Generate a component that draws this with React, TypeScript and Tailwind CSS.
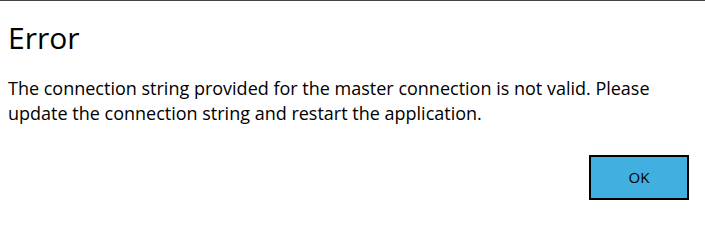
export default function App() {
    return (
        <div
            className="w-[705px] h-[232px] bg-white border-t border-[#444444] flex flex-col"
            style={{ fontFamily: '"Open Sans", "Noto Sans", sans-serif' }}
        >
            <h1 className="pl-[8px] pt-[17px] text-[30px] leading-[40px] text-black">Error</h1>
            <p className="pl-[8px] pt-[18px] pr-[40px] text-[18px] leading-[25px] text-black">
                The connection string provided for the master connection is not valid. Please
                update the connection string and restart the application.
            </p>
            <div className="flex justify-end pr-[16px] pt-[29px]">
                <button className="w-[100px] h-[45px] bg-[#41b0e1] border-2 border-black text-[15px] text-black">
                    OK
                </button>
            </div>
        </div>
    );
}
